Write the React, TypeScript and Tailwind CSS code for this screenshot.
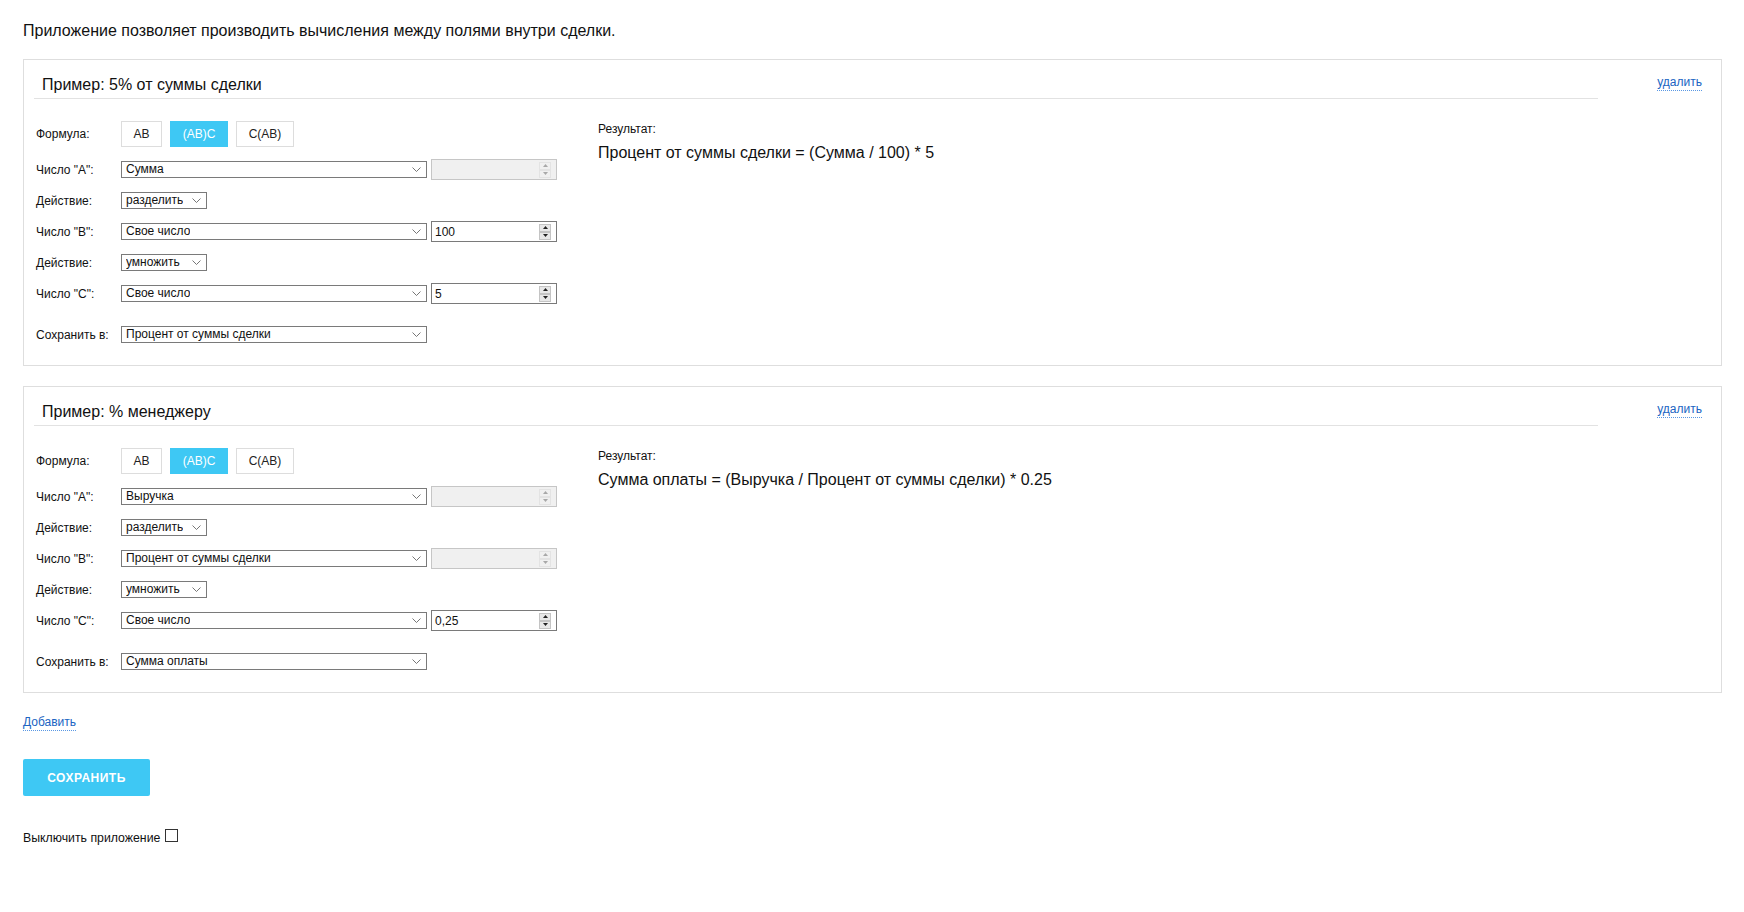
import type { ReactNode } from "react";

type Operand = { source: string; value?: string };

type Rule = {
  title: string;
  a: Operand;
  op1: string;
  b: Operand;
  op2: string;
  c: Operand;
  target: string;
  result: string;
};

const rules: Rule[] = [
  {
    title: "Пример: 5% от суммы сделки",
    a: { source: "Сумма" },
    op1: "разделить",
    b: { source: "Свое число", value: "100" },
    op2: "умножить",
    c: { source: "Свое число", value: "5" },
    target: "Процент от суммы сделки",
    result: "Процент от суммы сделки = (Сумма / 100) * 5",
  },
  {
    title: "Пример: % менеджеру",
    a: { source: "Выручка" },
    op1: "разделить",
    b: { source: "Процент от суммы сделки" },
    op2: "умножить",
    c: { source: "Свое число", value: "0,25" },
    target: "Сумма оплаты",
    result: "Сумма оплаты = (Выручка / Процент от суммы сделки) * 0.25",
  },
];

const Chevron = () => (
  <svg width="9" height="5" viewBox="0 0 9 5" className="shrink-0">
    <path d="M0.5 0.5 L4.5 4.5 L8.5 0.5" fill="none" stroke="#666" strokeWidth="0.9" />
  </svg>
);

const FakeSelect = ({ value, width }: { value: string; width: string }) => (
  <div
    className={`${width} h-[17px] border border-[#7a7a7a] bg-white flex items-center justify-between pl-[4px] pr-[5px] text-[12px] leading-[15px] text-[#111]`}
  >
    <span className="truncate">{value}</span>
    <Chevron />
  </div>
);

const Arrow = ({ up, disabled }: { up: boolean; disabled: boolean }) => (
  <div
    className={`h-[8px] w-[12px] flex items-center justify-center border ${
      disabled ? "border-[#e3e3e3] bg-[#f0f0f0]" : "border-[#c4c4c4] bg-[#e8e8e8]"
    }`}
  >
    <svg width="5" height="3" viewBox="0 0 5 3">
      <path
        d={up ? "M0 3 L2.5 0 L5 3 Z" : "M0 0 L2.5 3 L5 0 Z"}
        fill={disabled ? "#a8a8a8" : "#222"}
      />
    </svg>
  </div>
);

const NumberBox = ({ value }: { value?: string }) => {
  const disabled = value === undefined;
  return (
    <div
      className={`ml-[4px] w-[126px] h-[21px] border flex items-center justify-between pl-[3px] pr-[5px] text-[12px] text-[#111] ${
        disabled ? "border-[#c6c6c6] bg-[#f0f0f0]" : "border-[#7a7a7a] bg-white"
      }`}
    >
      <span>{value}</span>
      <div className="flex flex-col">
        <Arrow up disabled={disabled} />
        <Arrow up={false} disabled={disabled} />
      </div>
    </div>
  );
};

const Row = ({ label, children }: { label: string; children: ReactNode }) => (
  <div className="h-[31px] flex items-center">
    <div className="w-[85px] text-[12px] text-[#111]">{label}</div>
    {children}
  </div>
);

const RuleCard = ({ rule }: { rule: Rule }) => (
  <div className="border border-[#dedede] px-[10px] pb-[15px]">
    <div className="flex">
      <div className="flex-1 border-b border-[#e2e2e2] pt-[15px] pb-[3px] pl-[8px] text-[16px] leading-[20px] text-[#111]">
        {rule.title}
      </div>
      <div className="w-[113px] flex justify-end items-start pt-[14px] pr-[9px]">
        <a
          href="#"
          className="inline-block text-[12px] leading-[16px] text-[#2064c2] border-b border-dotted border-[#5a98e4]"
        >
          удалить
        </a>
      </div>
    </div>

    <div className="flex pl-[2px] pt-[22px]">
      <div className="w-[562px]">
        <div className="h-[26px] flex items-center">
          <div className="w-[85px] text-[12px] text-[#111]">Формула:</div>
          <div className="flex gap-[8px]">
            <button className="w-[41px] h-[26px] border border-[#dddddd] bg-white text-[12px] text-[#222]">
              AB
            </button>
            <button className="w-[58px] h-[26px] border border-[#3ec8f4] bg-[#3ec8f4] text-[12px] text-white">
              (AB)C
            </button>
            <button className="w-[58px] h-[26px] border border-[#dddddd] bg-white text-[12px] text-[#222]">
              C(AB)
            </button>
          </div>
        </div>
        <div className="mt-[7px]">
          <Row label='Число "A":'>
            <FakeSelect value={rule.a.source} width="w-[306px]" />
            <NumberBox value={rule.a.value} />
          </Row>
          <Row label="Действие:">
            <FakeSelect value={rule.op1} width="w-[86px]" />
          </Row>
          <Row label='Число "B":'>
            <FakeSelect value={rule.b.source} width="w-[306px]" />
            <NumberBox value={rule.b.value} />
          </Row>
          <Row label="Действие:">
            <FakeSelect value={rule.op2} width="w-[86px]" />
          </Row>
          <Row label='Число "C":'>
            <FakeSelect value={rule.c.source} width="w-[306px]" />
            <NumberBox value={rule.c.value} />
          </Row>
        </div>
        <div className="mt-[10px]">
          <Row label="Сохранить в:">
            <FakeSelect value={rule.target} width="w-[306px]" />
          </Row>
        </div>
      </div>
      <div>
        <div className="text-[12px] leading-[16px] text-[#111]">Результат:</div>
        <div className="mt-[6px] text-[16px] leading-[20px] text-[#111]">{rule.result}</div>
      </div>
    </div>
  </div>
);

const App = () => {
  return (
    <div className="min-h-screen bg-white pl-[23px] pr-[22px] pt-[21px] font-['Liberation_Sans',Arial,sans-serif] text-[#111]">
      <p className="text-[16px] leading-[20px]">
        Приложение позволяет производить вычисления между полями внутри сделки.
      </p>
      <div className="mt-[18px] flex flex-col gap-[20px]">
        {rules.map((rule) => (
          <RuleCard key={rule.title} rule={rule} />
        ))}
      </div>
      <div className="mt-[16px]">
        <a
          href="#"
          className="inline-block text-[12px] leading-[16px] text-[#2064c2] border-b border-dotted border-[#5a98e4]"
        >
          Добавить
        </a>
      </div>
      <button className="mt-[26px] block w-[127px] h-[37px] rounded-[2px] bg-[#3ec8f4] text-white text-[12px] font-bold tracking-[0.5px]">
        СОХРАНИТЬ
      </button>
      <label className="mt-[33px] inline-block text-[12.3px] leading-[16px] text-[#111]">
        Выключить приложение
        <input
          type="checkbox"
          className="appearance-none ml-[5px] w-[13px] h-[13px] border border-[#333] bg-white align-baseline"
        />
      </label>
    </div>
  );
};

export default App;
